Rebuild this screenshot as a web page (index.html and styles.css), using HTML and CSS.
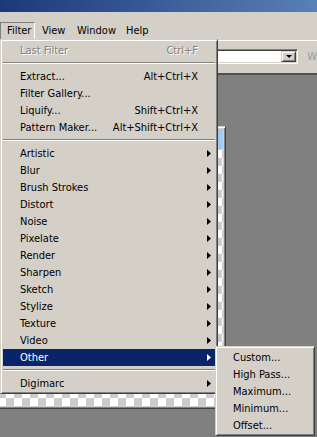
FILE: index.html
```html
<!DOCTYPE html>
<html lang="en">
<head>
    <meta charset="UTF-8">
    <meta name="viewport" content="width=device-width, initial-scale=1.0">
    <title>Filter Menu</title>
    <link rel="stylesheet" href="styles.css">
</head>
<body>
    <div class="screen">
        <div class="titlebar"></div>

        <div class="menubar">
            <span class="menubar-item pressed w-filter">Filter</span>
            <span class="menubar-item w-view">View</span>
            <span class="menubar-item w-window">Window</span>
            <span class="menubar-item w-help">Help</span>
        </div>

        <div class="toolbar">
            <div class="combo">
                <span class="combo-button"></span>
            </div>
            <span class="toolbar-label">W</span>
        </div>

        <div class="workspace"></div>

        <!-- document window behind the menus -->
        <div class="doc-window">
            <div class="doc-title"></div>
            <div class="doc-canvas"></div>
        </div>

        <div class="menu main-menu">
            <div class="menu-item disabled"><span>Last Filter</span><span class="shortcut">Ctrl+F</span></div>
            <div class="separator"></div>
            <div class="menu-item"><span>Extract...</span><span class="shortcut">Alt+Ctrl+X</span></div>
            <div class="menu-item"><span>Filter Gallery...</span></div>
            <div class="menu-item"><span>Liquify...</span><span class="shortcut">Shift+Ctrl+X</span></div>
            <div class="menu-item"><span>Pattern Maker...</span><span class="shortcut">Alt+Shift+Ctrl+X</span></div>
            <div class="separator"></div>
            <div class="menu-item has-sub"><span>Artistic</span><span class="arrow"></span></div>
            <div class="menu-item has-sub"><span>Blur</span><span class="arrow"></span></div>
            <div class="menu-item has-sub"><span>Brush Strokes</span><span class="arrow"></span></div>
            <div class="menu-item has-sub"><span>Distort</span><span class="arrow"></span></div>
            <div class="menu-item has-sub"><span>Noise</span><span class="arrow"></span></div>
            <div class="menu-item has-sub"><span>Pixelate</span><span class="arrow"></span></div>
            <div class="menu-item has-sub"><span>Render</span><span class="arrow"></span></div>
            <div class="menu-item has-sub"><span>Sharpen</span><span class="arrow"></span></div>
            <div class="menu-item has-sub"><span>Sketch</span><span class="arrow"></span></div>
            <div class="menu-item has-sub"><span>Stylize</span><span class="arrow"></span></div>
            <div class="menu-item has-sub"><span>Texture</span><span class="arrow"></span></div>
            <div class="menu-item has-sub"><span>Video</span><span class="arrow"></span></div>
            <div class="menu-item has-sub active"><span>Other</span><span class="arrow"></span></div>
            <div class="separator"></div>
            <div class="menu-item has-sub"><span>Digimarc</span><span class="arrow"></span></div>
        </div>

        <div class="menu sub-menu">
            <div class="menu-item"><span>Custom...</span></div>
            <div class="menu-item"><span>High Pass...</span></div>
            <div class="menu-item"><span>Maximum...</span></div>
            <div class="menu-item"><span>Minimum...</span></div>
            <div class="menu-item"><span>Offset...</span></div>
        </div>
    </div>
</body>
</html>
```

FILE: styles.css
```css
body {
    margin: 0;
    font-family: "DejaVu Sans Condensed", "DejaVu Sans", sans-serif;
    font-size: 11px;
    color: #000;
}

.screen {
    position: relative;
    width: 317px;
    height: 437px;
    overflow: hidden;
    display: flex;
    flex-direction: column;
    background-color: #d4d0c8;
}

.titlebar {
    height: 12px;
    background: linear-gradient(to right, #1c3878, #5a80b8);
}

/* menu bar */
.menubar {
    display: flex;
    height: 28px;
    box-sizing: border-box;
    padding-top: 10px;
}

.menubar-item {
    height: 17px;
    box-sizing: border-box;
    padding-left: 6px;
    line-height: 16px;
    border: 1px solid transparent;
    border-bottom: none;
}

.menubar-item.pressed {
    border-color: #808080 #fff #fff #808080;
}

.w-filter { width: 35px; }
.w-view { width: 35px; }
.w-window { width: 49px; }
.w-help { width: 34px; }

/* toolbar */
.toolbar {
    display: flex;
    align-items: flex-start;
    height: 33px;
    box-sizing: border-box;
    border-top: 1px solid #fff;
    padding-top: 8px;
}

.combo {
    display: flex;
    justify-content: flex-end;
    width: 99px;
    height: 15px;
    margin-left: 205px;
    box-sizing: border-box;
    background-color: #fff;
    border: 1px solid;
    border-color: #808080 #fff #fff #808080;
    box-shadow: inset 1px 1px #404040, inset -1px -1px #d4d0c8;
    padding: 1px;
}

.combo-button {
    position: relative;
    width: 15px;
    height: 11px;
    box-sizing: border-box;
    background-color: #d4d0c8;
    border: 1px solid;
    border-color: #d4d0c8 #404040 #404040 #d4d0c8;
    box-shadow: inset 1px 1px #fff, inset -1px -1px #808080;
}

.combo-button::after {
    content: "";
    position: absolute;
    left: 4px;
    top: 3px;
    border-top: 3px solid #000;
    border-left: 3px solid transparent;
    border-right: 3px solid transparent;
}

.toolbar-label {
    margin-left: 9px;
    margin-top: 1px;
    color: #9a9a9a;
}

.workspace {
    flex: 1;
    background-color: #808080;
    border-top: 2px solid #505050;
}

/* document window */
.doc-window {
    position: absolute;
    left: -4px;
    top: 126px;
    width: 230px;
    height: 283px;
    box-sizing: border-box;
    display: flex;
    flex-direction: column;
    background-color: #d4d0c8;
    border: 1px solid;
    border-color: #d4d0c8 #404040 #404040 #d4d0c8;
    box-shadow: inset 1px 1px #fff, inset -1px -1px #808080;
    padding: 2px;
}

.doc-title {
    height: 20px;
    background: linear-gradient(to right, #0a246a, #a6caf0);
}

.doc-canvas {
    flex: 1;
    background-color: #fff;
    background-image: conic-gradient(#fff 25%, #ccc 0 50%, #fff 0 75%, #ccc 0);
    background-size: 16px 16px;
    background-position: 7px 9px;
}

/* menus */
.menu {
    position: absolute;
    box-sizing: border-box;
    background-color: #d4d0c8;
    border: 1px solid;
    border-color: #d4d0c8 #404040 #404040 #d4d0c8;
    box-shadow: inset 1px 1px #fff, inset -1px -1px #808080;
    padding: 2px 2px 1px 2px;
}

.main-menu {
    left: 0;
    top: 39px;
    width: 218px;
}

.sub-menu {
    left: 215px;
    top: 346px;
    width: 100px;
}

.menu-item {
    display: flex;
    align-items: center;
    height: 17px;
    padding: 0 17px;
    white-space: nowrap;
}

.sub-menu .menu-item {
    padding: 0 15px;
}

.menu-item .shortcut {
    margin-left: auto;
}

.menu-item.has-sub {
    padding-right: 4px;
}

.arrow {
    margin-left: auto;
    width: 4px;
    height: 7px;
    background-color: #000;
    clip-path: polygon(0 0, 100% 50%, 0 100%);
}

.menu-item.active {
    background-color: #0a246a;
    color: #fff;
}

.menu-item.active .arrow {
    background-color: #fff;
}

.menu-item.disabled {
    color: #808080;
    text-shadow: 1px 1px 0 #fff;
}

.separator {
    height: 9px;
    box-sizing: border-box;
    padding-top: 3px;
}

.separator::after {
    content: "";
    display: block;
    border-top: 1px solid #808080;
    border-bottom: 1px solid #fff;
}
```
